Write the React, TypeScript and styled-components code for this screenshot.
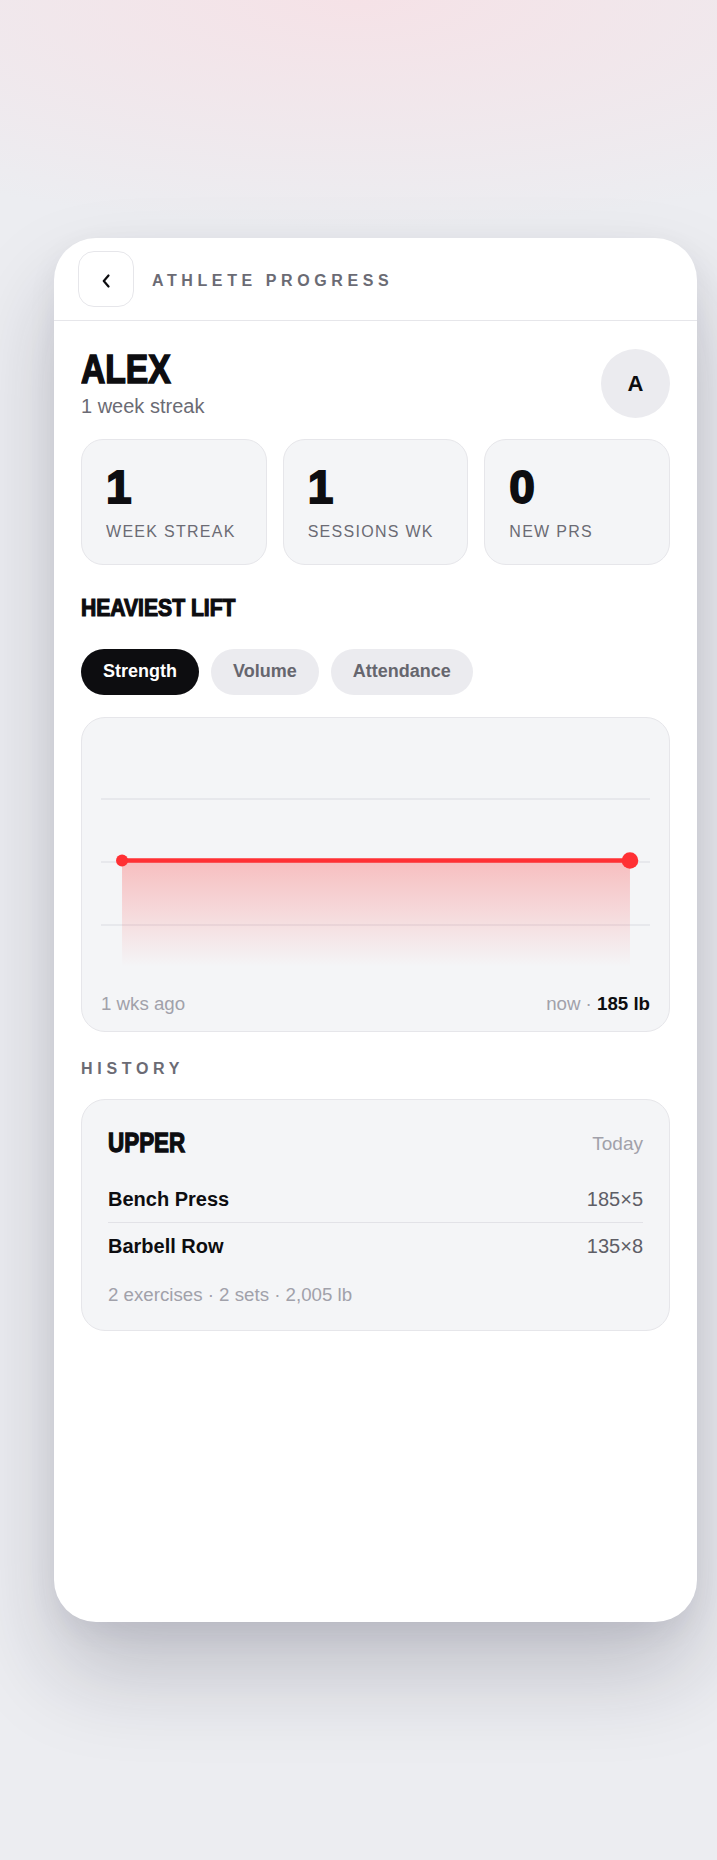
import React from "react";
import styled, { createGlobalStyle, css } from "styled-components";

const GlobalStyle = createGlobalStyle`
  html, body { margin: 0; padding: 0; }
  body {
    background: #ecedf1;
    font-family: "Liberation Sans", Arial, sans-serif;
    color: #0d0d10;
  }
  * { box-sizing: border-box; }
`;

/* Heavy condensed display type: bold sans, thickened and narrowed */
const display = (scale: number, stroke: number) => css`
  display: inline-block;
  font-family: "Liberation Sans", Arial, sans-serif;
  font-weight: 700;
  line-height: 1;
  color: #0d0d10;
  text-transform: uppercase;
  -webkit-text-stroke: ${stroke}px #0d0d10;
  transform: scaleX(${scale});
  transform-origin: left center;
  white-space: nowrap;
`;

const Page = styled.div`
  min-height: 1860px;
  padding: 238px 20px 238px 54px;
  background:
    radial-gradient(ellipse 95% 230px at 50% 0%, rgba(247, 224, 229, 0.85), rgba(247, 224, 229, 0) 100%),
    #ecedf1;
`;

const Phone = styled.div`
  height: 1384px;
  background: #ffffff;
  border-radius: 42px;
  overflow: hidden;
  box-shadow: 0 50px 90px rgba(25, 25, 45, 0.21), 0 10px 30px rgba(25, 25, 45, 0.06);
`;

const Header = styled.header`
  display: flex;
  align-items: center;
  gap: 18px;
  height: 83px;
  padding: 0 24px;
  border-bottom: 1px solid #e6e6ea;
`;

const BackButton = styled.button`
  width: 56px;
  height: 56px;
  border-radius: 16px;
  border: 1px solid #e6e6ea;
  background: #ffffff;
  display: flex;
  align-items: center;
  justify-content: center;
  padding: 4px 0 0;
  color: #0d0d10;
`;

const Eyebrow = styled.div`
  padding-top: 4px;
  font-weight: 700;
  font-size: 16px;
  letter-spacing: 4.6px;
  color: #6b6b74;
  text-transform: uppercase;
  line-height: 1;
`;

const Content = styled.main`
  padding: 28px 27px 0;
`;

const ProfileRow = styled.div`
  display: flex;
  align-items: flex-start;
  justify-content: space-between;
`;

const NameBlock = styled.div`
  display: flex;
  flex-direction: column;
  align-items: flex-start;
  gap: 4px;
`;

const Name = styled.h1`
  margin: 0;
  font-size: 41px;
  ${display(0.82, 1.6)}
`;

const Subtitle = styled.div`
  font-size: 20px;
  line-height: 24px;
  color: #6b6b74;
`;

const Avatar = styled.div`
  width: 69px;
  height: 69px;
  border-radius: 50%;
  background: #ebebef;
  display: flex;
  align-items: center;
  justify-content: center;
  font-weight: 700;
  font-size: 22px;
  color: #0d0d10;
`;

const StatGrid = styled.div`
  display: grid;
  grid-template-columns: repeat(3, 1fr);
  gap: 16px;
  margin-top: 21px;
`;

const StatCard = styled.div`
  background: #f4f5f7;
  border: 1px solid #e6e6ea;
  border-radius: 22px;
  padding: 24px 24px 23px;
  display: flex;
  flex-direction: column;
  align-items: flex-start;
  gap: 12px;
`;

const StatValue = styled.div`
  font-size: 46px;
  ${display(1, 1.8)}
`;

const StatLabel = styled.div`
  font-size: 16px;
  line-height: 19.2px;
  letter-spacing: 0.08em;
  color: #6b6b74;
  text-transform: uppercase;
  white-space: nowrap;
`;

const SectionTitle = styled.h2`
  margin: 31px 0 0;
  font-size: 24px;
  ${display(0.88, 1.2)}
`;

const Tabs = styled.div`
  display: flex;
  gap: 12px;
  margin-top: 28.5px;
`;

const Tab = styled.button<{ $active?: boolean }>`
  height: 46px;
  padding: 0 22px;
  border: none;
  border-radius: 23px;
  font-family: "Liberation Sans", Arial, sans-serif;
  font-weight: 700;
  font-size: 18px;
  background: ${(p) => (p.$active ? "#0d0d10" : "#ebebef")};
  color: ${(p) => (p.$active ? "#ffffff" : "#66666e")};
`;

const ChartCard = styled.div`
  margin-top: 22px;
  background: #f4f5f7;
  border: 1px solid #e6e6ea;
  border-radius: 24px;
  padding: 18px 19px 16px;
`;

const ChartSvg = styled.svg`
  display: block;
  width: 100%;
  height: 252px;
`;

const ChartFooter = styled.div`
  margin-top: 5px;
  display: flex;
  justify-content: space-between;
  font-size: 18.7px;
  line-height: 22.4px;
  color: #a1a1aa;
`;

const Strong = styled.span`
  font-weight: 700;
  color: #0d0d10;
`;

const SmallCaps = styled.div`
  margin-top: 29px;
  font-weight: 700;
  font-size: 16px;
  line-height: 1;
  letter-spacing: 4.7px;
  color: #6b6b74;
  text-transform: uppercase;
`;

const HistoryCard = styled.div`
  margin-top: 22px;
  background: #f4f5f7;
  border: 1px solid #e6e6ea;
  border-radius: 24px;
  padding: 30px 26px 23px;
`;

const SessionHead = styled.div`
  display: flex;
  align-items: center;
  justify-content: space-between;
  margin-bottom: 19px;
`;

const SessionName = styled.div`
  font-size: 27px;
  ${display(0.83, 1.3)}
`;

const SessionDate = styled.div`
  font-size: 19px;
  color: #a1a1aa;
`;

const ExerciseRow = styled.div`
  display: flex;
  justify-content: space-between;
  padding: 11px 0;
  font-size: 20px;
  line-height: 24px;
  & + & {
    border-top: 1px solid #e2e2e7;
  }
`;

const ExerciseName = styled.span`
  font-weight: 700;
  color: #0d0d10;
`;

const ExerciseSet = styled.span`
  color: #5e5e66;
`;

const Summary = styled.div`
  margin-top: 15px;
  font-size: 18.7px;
  line-height: 22.4px;
  color: #a1a1aa;
`;

const stats = [
  { value: "1", label: "Week streak" },
  { value: "1", label: "Sessions wk" },
  { value: "0", label: "New PRs" },
];

const exercises = [
  { name: "Bench Press", set: "185×5" },
  { name: "Barbell Row", set: "135×8" },
];

function Chart() {
  const w = 548;
  const h = 252;
  const x1 = 21;
  const x2 = 528;
  const y = 124.5;
  return (
    <ChartSvg viewBox={`0 0 ${w} ${h}`} preserveAspectRatio="none">
      <defs>
        <linearGradient id="fillGrad" x1="0" y1="0" x2="0" y2="1">
          <stop offset="0%" stopColor="#ff3030" stopOpacity="0.28" />
          <stop offset="100%" stopColor="#ff3030" stopOpacity="0" />
        </linearGradient>
      </defs>
      {[63, 126, 189].map((gy) => (
        <line key={gy} x1="0" x2={w} y1={gy} y2={gy} stroke="#e3e3e8" strokeWidth="1.5" />
      ))}
      <rect x={x1} y={y} width={x2 - x1} height={106} fill="url(#fillGrad)" />
      <line x1={x1} x2={x2} y1={y} y2={y} stroke="#ff3034" strokeWidth="4.5" strokeLinecap="round" />
      <circle cx={x1} cy={y} r="6" fill="#ff3034" />
      <circle cx={x2} cy={y} r="8.3" fill="#ff3034" />
    </ChartSvg>
  );
}

export default function App() {
  return (
    <>
      <GlobalStyle />
      <Page>
        <Phone>
          <Header>
            <BackButton aria-label="Back">
              <svg width="8" height="14" viewBox="0 0 8 14" fill="none">
                <path d="M6.5 1.5 L1.8 7 L6.5 12.5" stroke="#0d0d10" strokeWidth="2.2" strokeLinecap="round" strokeLinejoin="round" />
              </svg>
            </BackButton>
            <Eyebrow>Athlete Progress</Eyebrow>
          </Header>
          <Content>
            <ProfileRow>
              <NameBlock>
                <Name>ALEX</Name>
                <Subtitle>1 week streak</Subtitle>
              </NameBlock>
              <Avatar>A</Avatar>
            </ProfileRow>

            <StatGrid>
              {stats.map((s) => (
                <StatCard key={s.label}>
                  <StatValue>{s.value}</StatValue>
                  <StatLabel>{s.label}</StatLabel>
                </StatCard>
              ))}
            </StatGrid>

            <SectionTitle>Heaviest Lift</SectionTitle>
            <Tabs>
              <Tab $active>Strength</Tab>
              <Tab>Volume</Tab>
              <Tab>Attendance</Tab>
            </Tabs>

            <ChartCard>
              <Chart />
              <ChartFooter>
                <span>1 wks ago</span>
                <span>
                  now · <Strong>185 lb</Strong>
                </span>
              </ChartFooter>
            </ChartCard>

            <SmallCaps>History</SmallCaps>
            <HistoryCard>
              <SessionHead>
                <SessionName>Upper</SessionName>
                <SessionDate>Today</SessionDate>
              </SessionHead>
              {exercises.map((e) => (
                <ExerciseRow key={e.name}>
                  <ExerciseName>{e.name}</ExerciseName>
                  <ExerciseSet>{e.set}</ExerciseSet>
                </ExerciseRow>
              ))}
              <Summary>2 exercises · 2 sets · 2,005 lb</Summary>
            </HistoryCard>
          </Content>
        </Phone>
      </Page>
    </>
  );
}
